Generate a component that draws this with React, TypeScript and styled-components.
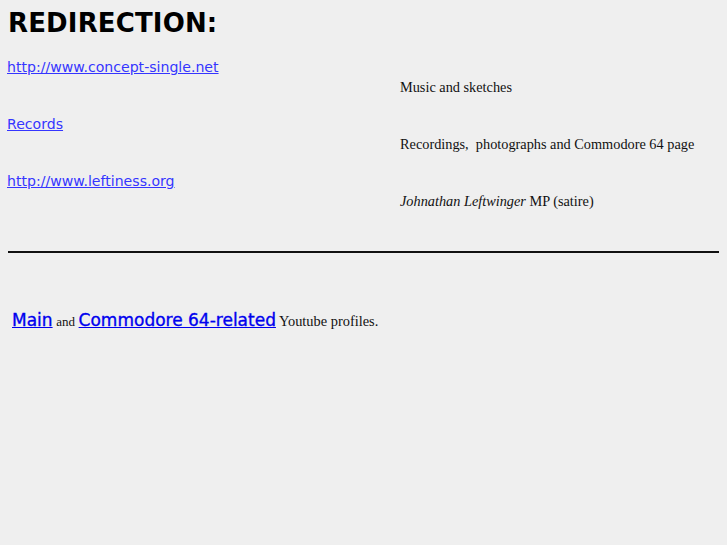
import React from "react";
import styled, { createGlobalStyle } from "styled-components";

const Global = createGlobalStyle`
  html, body { margin: 0; padding: 0; background: #efefef; }
  body { padding: 8px; font-family: "Liberation Serif", serif; color: #111; }
`;

const Title = styled.h1`
  margin: 0;
  font-family: "DejaVu Sans", sans-serif;
  font-weight: bold;
  font-size: 26px;
  line-height: 30px;
  letter-spacing: 0.15px;
  color: #000;
`;

const LinkTable = styled.div`
  display: grid;
  grid-template-columns: 392px 1fr;
  grid-auto-rows: 57px;
  margin-top: 20px;
`;

const SiteLink = styled.a`
  margin-left: -1px;
  font-family: "DejaVu Sans", sans-serif;
  font-size: 14.1px;
  line-height: 18px;
  color: #3535ff;
`;

const Desc = styled.div`
  font-family: "Liberation Serif", serif;
  font-size: 14.3px;
  line-height: 18px;
  padding-top: 20px;
`;

const Rule = styled.hr`
  margin: 22px 0 0;
  border: 0;
  height: 2px;
  background: #111;
`;

const Footer = styled.p`
  margin: 57px 0 0 4px;
  font-family: "Liberation Serif", serif;
  font-size: 14.4px;
`;

const Big = styled.a`
  font-family: "DejaVu Sans", sans-serif;
  font-size: 17px;
  color: #0000ee;
  -webkit-text-stroke: 0.35px #0000ee;
`;

const Small = styled.span`
  font-size: 13px;
`;

const rows = [
  { href: "http://www.concept-single.net", label: "http://www.concept-single.net", desc: <>Music and sketches</> },
  { href: "#", label: "Records", desc: <>Recordings,&nbsp; photographs and Commodore 64 page</> },
  { href: "http://www.leftiness.org", label: "http://www.leftiness.org", desc: <><i>Johnathan Leftwinger</i> MP (satire)</> },
];

export default function App() {
  return (
    <>
      <Global />
      <Title>REDIRECTION:</Title>
      <LinkTable>
        {rows.map((r) => (
          <React.Fragment key={r.label}>
            <div><SiteLink href={r.href}>{r.label}</SiteLink></div>
            <Desc>{r.desc}</Desc>
          </React.Fragment>
        ))}
      </LinkTable>
      <Rule />
      <Footer>
        <Big href="#">Main</Big> <Small>and</Small> <Big href="#">Commodore 64-related</Big> Youtube profiles.
      </Footer>
    </>
  );
}
